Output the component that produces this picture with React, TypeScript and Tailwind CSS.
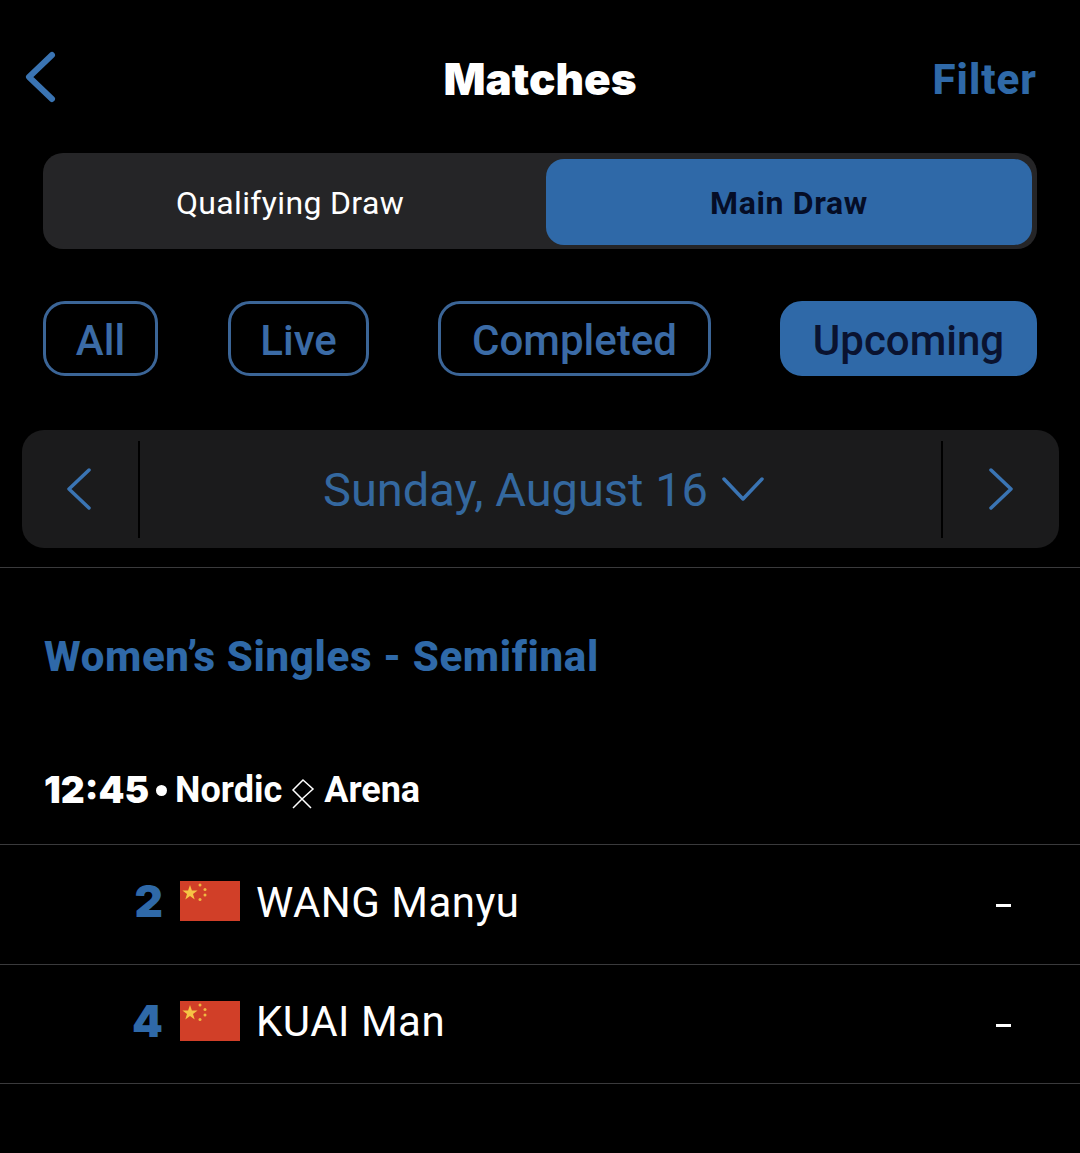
const sans = "font-['Roboto','Liberation_Sans',sans-serif]";

function ChineseFlag() {
  return (
    <svg width="60" height="40" viewBox="0 0 60 40" className="shrink-0">
      <rect width="60" height="40" fill="#d13f28" />
      <polygon
        points="10,4 11.9,9.4 17.6,9.4 13,12.9 14.7,18.4 10,15.1 5.3,18.4 7,12.9 2.4,9.4 8.1,9.4"
        fill="#f6c445"
      />
      <g fill="#f0b840">
        <circle cx="20" cy="4" r="1.5" />
        <circle cx="25" cy="8.5" r="1.5" />
        <circle cx="25" cy="14" r="1.5" />
        <circle cx="20" cy="18.5" r="1.5" />
      </g>
    </svg>
  );
}

function MatchRow({ seed, name, last }: { seed: string; name: string; last?: boolean }) {
  return (
    <div className={`flex items-center border-b border-[#3a3a3c] pb-[7px] pr-[69px] ${last ? "h-[119px]" : "h-[120px]"}`}>
      <div className="w-[164px] pr-[1px] text-right font-['Inter',sans-serif] text-[44px] font-black leading-none text-[#2f69a8]">
        {seed}
      </div>
      <div className="ml-[16px]">
        <ChineseFlag />
      </div>
      <div className={`ml-[16px] mt-[2px] flex-1 text-[42px] tracking-[0.5px] text-white ${sans}`}>{name}</div>
      <div className="mt-[9px] h-[3px] w-[15px] bg-white" />
    </div>
  );
}

function Chip({ label, width, active }: { label: string; width: string; active?: boolean }) {
  return (
    <div
      className={`flex h-[75px] items-center justify-center rounded-[22px] border-[3px] pt-[4px] text-[42px] font-medium leading-none ${width} ${sans} ${
        active ? "border-[#2f69a8] bg-[#2f69a8] text-[#0a1330]" : "border-[#3b6597] text-[#3b6ba6]"
      }`}
    >
      {label}
    </div>
  );
}

export default function App() {
  return (
    <div className={`h-[1153px] w-[1080px] overflow-hidden bg-black ${sans}`}>
      {/* Top navigation */}
      <div className="grid h-[153px] grid-cols-3 items-start pt-[50px]">
        <div className="pl-[24px]">
          <svg width="34" height="54" viewBox="0 0 34 54" fill="none">
            <path d="M28 5 L5 27 L28 49" stroke="#3a74b3" strokeWidth="6" strokeLinecap="round" strokeLinejoin="round" />
          </svg>
        </div>
        <div className="whitespace-nowrap text-center font-['Inter',sans-serif] text-[44px] font-black leading-[58px] text-white">
          Matches
        </div>
        <div className="pr-[43px] text-right text-[42px] font-extrabold leading-[60px] tracking-[1px] text-[#2f69a8]">
          Filter
        </div>
      </div>

      {/* Draw selector */}
      <div className="mx-[43px] flex h-[96px] rounded-[20px] bg-[#252527] pb-[4px] pl-[6px] pr-[5px] pt-[6px]">
        <div className="flex w-[497px] items-center justify-center pr-[15px] pt-[2px] text-[32px] tracking-[0.35px] text-white">
          Qualifying Draw
        </div>
        <div className="flex flex-1 items-center justify-center rounded-[18px] bg-[#2f69a8] pt-[2px] text-[32px] font-bold tracking-[0.65px] text-[#050d26]">
          Main Draw
        </div>
      </div>

      {/* Status chips */}
      <div className="mx-[43px] mt-[52px] flex justify-between">
        <div className="flex w-[326px] justify-between">
          <Chip label="All" width="w-[115px]" />
          <Chip label="Live" width="w-[141px]" />
        </div>
        <Chip label="Completed" width="w-[273px]" />
        <Chip label="Upcoming" width="w-[257px]" active />
      </div>

      {/* Date picker */}
      <div className="ml-[22px] mr-[21px] mt-[54px] flex h-[118px] items-center rounded-[22px] bg-[#1b1b1c]">
        <div className="flex h-full w-[116px] items-center justify-center pr-[2px]">
          <svg width="26" height="42" viewBox="0 0 26 42" fill="none">
            <path d="M23 2 L3 21 L23 40" stroke="#3a74b3" strokeWidth="3.5" strokeLinecap="round" strokeLinejoin="round" />
          </svg>
        </div>
        <div className="h-[97px] w-[2px] bg-black" />
        <div className="flex flex-1 items-center justify-center gap-[14px] pl-[6px] pt-[3px] text-[47px] text-[#34689f]">
          <span>Sunday, August 16</span>
          <svg width="42" height="26" viewBox="0 0 42 26" fill="none" className="-mt-[3px]">
            <path d="M2 3 L21 23 L40 3" stroke="#3a74b3" strokeWidth="3.5" strokeLinecap="round" strokeLinejoin="round" />
          </svg>
        </div>
        <div className="h-[97px] w-[2px] bg-black" />
        <div className="flex h-full w-[116px] items-center justify-center">
          <svg width="26" height="42" viewBox="0 0 26 42" fill="none">
            <path d="M3 2 L23 21 L3 40" stroke="#3a74b3" strokeWidth="3.5" strokeLinecap="round" strokeLinejoin="round" />
          </svg>
        </div>
      </div>

      <div className="mt-[19px] h-px bg-[#3a3a3c]" />

      {/* Round heading */}
      <div className="ml-[44px] mt-[62px] text-[42px] font-extrabold leading-[54px] tracking-[0.65px] text-[#2f69a8]">
        Women’s Singles - Semifinal
      </div>

      {/* Time and venue */}
      <div className="mt-[79px] flex h-[54px] items-center pl-[44px] text-[36px] font-bold text-white">
        <span className="font-['Inter',sans-serif] text-[37px] font-black">12:45</span>
        <span className="ml-[7px] mr-[8px] h-[11px] w-[11px] rounded-full bg-white" />
        <span>Nordic</span>
        <svg width="26" height="32" viewBox="0 0 26 32" fill="none" className="ml-[7px] mr-[9px] mt-[8px]">
          <path d="M14 2 L24 11 L13 21 L4 12 Z M13 21 L4 30 M13 21 L22 30" stroke="#fff" strokeWidth="1.5" />
        </svg>
        <span>Arena</span>
      </div>

      <div className="mt-[27px] h-px bg-[#3a3a3c]" />
      <MatchRow seed="2" name="WANG Manyu" />
      <MatchRow seed="4" name="KUAI Man" last />
    </div>
  );
}
